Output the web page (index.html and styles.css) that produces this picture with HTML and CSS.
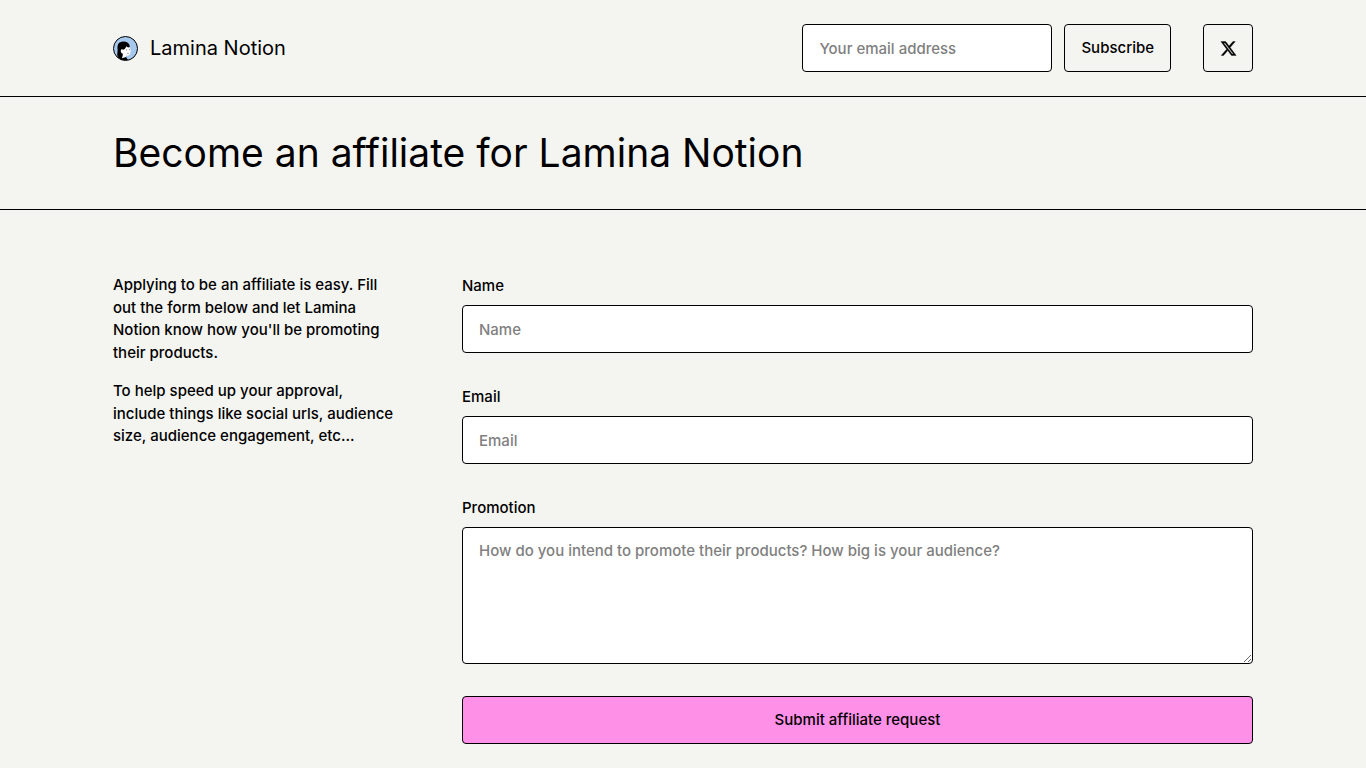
FILE: index.html
```html
<!DOCTYPE html>
<html lang="en">
<head>
  <meta charset="UTF-8" />
  <meta name="viewport" content="width=device-width, initial-scale=1" />
  <title>Become an affiliate for Lamina Notion</title>
  <link rel="stylesheet" href="styles.css">
</head>
<body>
  <header class="topbar">
    <div class="container topbar-row">
      <a class="brand" href="#">
        <svg class="avatar" viewBox="0 0 25 25" aria-hidden="true">
          <circle cx="12.5" cy="12.5" r="12" fill="#a6c8ec" />
          <path d="M9 24C4.500 22.500 3.800 19.500 4.500 16C5 13 3.800 11 5 8.500C6.200 6 8.800 5.300 11.300 5.600C14.300 5.700 16.600 7.500 16.800 10.800L13 15L10 19.500L9.500 22Z" fill="#000" />
          <path d="M7.800 14.400C8 13 9.600 12.900 10.200 13.800C12 13 13 11.600 13.300 10.200C14.300 11.400 15.800 11.600 16.900 11.200L17.700 15L17 18.300C16 19.900 14 19.800 12.800 19.400L13 21L9 22.500C9.700 20.500 10 19 9.600 17.600C8.300 17.200 7.600 15.800 7.800 14.400Z" fill="#fff" />
          <path d="M8.500 22.500L13 20.900L15 24H9.500Z" fill="#000" />
          <path d="M13 13.900h1M15.900 13.600h.9M14.300 17.300h1.400" stroke="#000" stroke-width=".5" fill="none" />
          <circle cx="12.500" cy="12.500" r="12" fill="none" stroke="#000" />
        </svg>
        <span>Lamina Notion</span>
      </a>
      <div class="actions">
        <form class="subscribe">
          <input class="field" type="email" placeholder="Your email address" aria-label="Your email address">
          <button class="button" type="submit">Subscribe</button>
        </form>
        <a class="button social" href="#" aria-label="X">
          <svg viewBox="0 0 24 24" aria-hidden="true">
            <path fill="currentColor" stroke="currentColor" stroke-width=".5" d="M18.244 2.250h3.308l-7.227 8.260 8.502 11.240H16.170l-5.214-6.817L4.990 21.750H1.680l7.730-8.835L1.254 2.250H8.080l4.713 6.231zm-1.161 17.520h1.833L7.084 4.126H5.117z" />
          </svg>
        </a>
      </div>
    </div>
  </header>

  <section class="heading">
    <div class="container">
      <h1>Become an affiliate for Lamina Notion</h1>
    </div>
  </section>

  <main class="container content">
    <div class="intro">
      <p>Applying to be an affiliate is easy. Fill out the form below and let Lamina Notion know how you'll be promoting their products.</p>
      <p>To help speed up your approval, include things like social urls, audience size, audience engagement, etc...</p>
    </div>
    <form class="request">
      <div class="group">
        <label for="name">Name</label>
        <input class="field" type="text" id="name" placeholder="Name">
      </div>
      <div class="group">
        <label for="email">Email</label>
        <input class="field" type="email" id="email" placeholder="Email">
      </div>
      <div class="group">
        <label for="promotion">Promotion</label>
        <textarea class="field" id="promotion" rows="5" placeholder="How do you intend to promote their products? How big is your audience?"></textarea>
      </div>
      <button class="button primary" type="submit">Submit affiliate request</button>
    </form>
  </main>
</body>
</html>
```
FILE: styles.css
```css
* {
  box-sizing: border-box;
}
body {
  margin: 0;
  background: #f4f4f0;
  color: #000;
  font-family: Inter, "Liberation Sans", sans-serif;
  font-size: 15px;
  font-weight: 500;
  line-height: 1.5;
}
.container {
  width: 100%;
  max-width: 1204px;
  margin: 0 auto;
  padding: 0 32px;
}
.topbar {
  padding: 24px 0;
  border-bottom: 1px solid #000;
}
.topbar-row {
  display: flex;
  align-items: center;
  justify-content: space-between;
  gap: 32px;
}
.brand {
  display: flex;
  align-items: center;
  gap: 12px;
  color: inherit;
  font-size: 20px;
  font-weight: 400;
  text-decoration: none;
}
.avatar {
  width: 25px;
  height: 25px;
}
.actions {
  display: flex;
  gap: 32px;
}
.subscribe {
  display: flex;
  gap: 12px;
}
.subscribe .field {
  width: 250px;
}
.field {
  display: block;
  width: 100%;
  padding: 12px 16px;
  background: #fff;
  border: 1px solid #000;
  border-radius: 4px;
  color: inherit;
  font: inherit;
}
input.field {
  height: 48px;
}
textarea.field {
  height: 137px;
  resize: vertical;
}
.field::placeholder {
  color: #808080;
}
.button {
  display: flex;
  align-items: center;
  justify-content: center;
  height: 48px;
  padding: 0 16px;
  background: transparent;
  border: 1px solid #000;
  border-radius: 4px;
  color: inherit;
  font: inherit;
  cursor: pointer;
}
.social {
  width: 50px;
}
.social svg {
  flex: none;
  width: 17px;
  height: 17px;
}
.primary {
  width: 100%;
  background: #ff90e8;
}
.heading {
  padding: 32px 0;
  border-bottom: 1px solid #000;
}
h1 {
  margin: 0;
  font-size: 39px;
  font-weight: 400;
  line-height: 48px;
}
.content {
  display: grid;
  grid-template-columns: 285px 1fr;
  gap: 64px;
  padding-top: 64px;
  padding-bottom: 16px;
}
.intro p {
  margin: 0 0 16px;
}
.request {
  display: grid;
  gap: 32px;
  align-content: start;
}
.group {
  display: grid;
  gap: 8px;
}
.group label {
  line-height: 23px;
}
@media (max-width: 900px) {
  .topbar-row { flex-wrap: wrap; }
  .content { grid-template-columns: 1fr; gap: 32px; }
}
```
